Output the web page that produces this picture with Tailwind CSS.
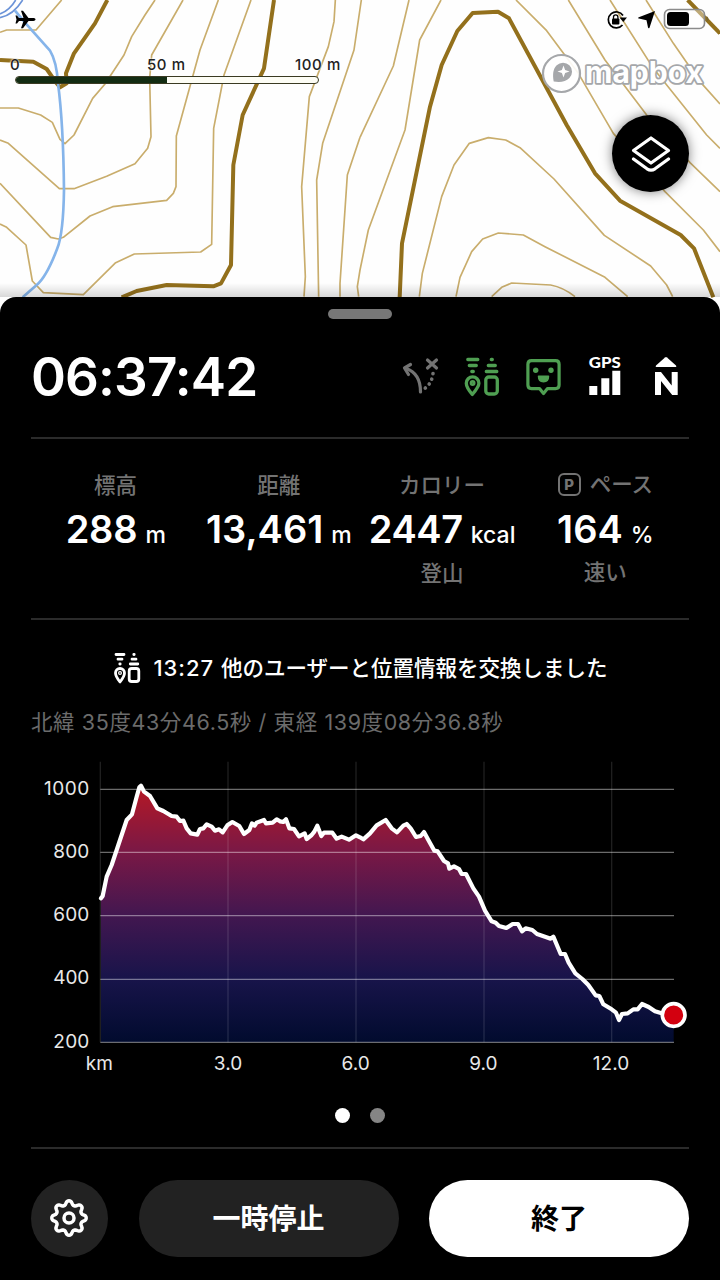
<!DOCTYPE html>
<html lang="ja">
<head>
  <meta charset="UTF-8">
  <meta name="viewport" content="width=device-width, initial-scale=1.0">
  <title>活動記録</title>
  <script src="https://cdn.jsdelivr.net/npm/@tailwindcss/browser@4"></script>
</head>
<body class="bg-black font-['Inter','Noto_Sans_CJK_JP',sans-serif] text-white">
  <div class="w-[720px] h-[1280px] flex flex-col overflow-hidden">

    <!-- map -->
    <div class="relative h-[297px] shrink-0 text-black">
      <svg class="absolute inset-0 bg-[#fefefe]" width="720" height="320" viewBox="0 0 2160 960" fill="none" stroke-linejoin="round">
        <g stroke="#c9ad6c" stroke-width="5">
          <path d="M185 0L108 90H20L0 97"/>
          <path d="M465 0L435 45L395 110L372 165L315 252L278 295L222 405L195 431L180 418L157 367L122 345L55 324H0"/>
          <path d="M549 0L455 165L449 235L453 410L443 445L405 491L320 529L222 566H178L25 430L0 420"/>
          <path d="M655 0L600 150L529 408L528 560L520 580L500 601L338 620L270 648L190 712L175 717L152 712L0 550"/>
          <path d="M753 0L672 225L641 385L635 733L602 756L403 762L347 788L250 884L130 878L97 843L78 735L20 682L0 672"/>
          <path d="M1006 0L1002 65L985 140L928 290L905 560L916 830L912 890"/>
          <path d="M1084 0L1062 150L968 430L950 540L956 890"/>
          <path d="M1080 412L1042 525L1020 850V890"/>
        </g>
        <!-- ridge side -->
        <g transform="translate(1080 0)" stroke="#c9ad6c" stroke-width="5">
          <path d="M147 0L100 198L0 412"/>
          <path d="M243 0L179 120L135 390L25 690L0 810L-8 860L-4 890"/>
          <path d="M178 890L187 820L245 590L282 495L328 430L385 413L437 420L480 443L582 537L733 706L872 798L920 855L938 890"/>
          <path d="M288 890L300 832L335 755L368 717L415 699L490 705L555 740L735 832L803 890"/>
          <path d="M395 890L425 862L455 849L572 855Q610 862 645 890"/>
          <path d="M468 0L560 92L655 220L760 400L915 575L1030 690L1080 755"/>
          <path d="M625 0L735 180L860 345L990 488L1080 575"/>
          <path d="M750 0L880 205L1040 405L1080 445"/>
          <path d="M858 0L940 130L1020 245L1080 312"/>
        </g>
        <g stroke="#93701c" stroke-width="12">
          <path d="M0 180L100 185L140 207L170 250L180 262L200 250L198 220L222 160L285 70L322 0"/>
          <path d="M822 0L792 205L728 345L700 495L693 795L663 850L640 859L500 855L410 873L365 892"/>
          <path d="M1199 892L1206 730L1290 320L1325 195L1372 93L1418 39L1494 35L1527 55L1700 375L1785 520L1860 602L2042 705L2082 745L2140 892"/>
          <path d="M2063 0L2160 100"/>
        </g>
        <g stroke="#85b4ea" stroke-width="8">
          <path d="M45 32L75 68L150 152Q170 185 174 250Q190 370 192 570Q190 700 172 745Q140 830 110 855L68 892"/>
          <path d="M0 53Q40 45 68 0M0 42Q30 30 47 0" stroke="#6b93d8" stroke-width="5"/>
        </g>
      </svg>

      <!-- scale bar -->
      <div class="absolute left-[15px] top-[56px] w-[304px] text-[15px] leading-[18px] font-medium text-[#222]">
        <div class="relative h-[20px] [text-shadow:0_0_2px_white,0_0_2px_white]">
          <span class="absolute -left-[5px]">0</span>
          <span class="absolute left-[132px] tracking-[0.6px]">50 m</span>
          <span class="absolute left-[280px] tracking-[0.6px] whitespace-nowrap">100 m</span>
        </div>
        <div class="h-[8px] rounded-full border border-[#3a3a22] bg-[#fdfdf5] overflow-hidden">
          <div class="h-full w-1/2 bg-[#132c12]"></div>
        </div>
      </div>

      <!-- status bar -->
      <svg class="absolute left-[15px] top-[10px]" width="21" height="19" viewBox="0 0 21 19"><path d="M20.5 9.6c0-1-1-1.5-2.200-1.500h-4.800L8 .8H6l2.500 7.300H4L2 5.500H.5L1.500 9.600.5 13.500H2L4 11h4.500L6 18.300h2L13.500 11h4.800c1.200 0 2.200-.5 2.200-1.400z"/></svg>
      <svg class="absolute left-[605px] top-[8px]" width="104" height="24" viewBox="0 0 104 24">
        <path d="M18 7.500A8 8 0 1 0 17.500 17" fill="none" stroke="black" stroke-width="1.700"/>
        <path d="M14.500 9.500h7.500L18.300 14z"/>
        <rect x="7" y="10.500" width="7.400" height="6" rx="1"/>
        <path d="M8.500 11V9a2.200 2.200 0 0 1 4.400 0v2" fill="none" stroke="black" stroke-width="1.300"/>
        <path d="M50 3L33.800 9.200c-.8.400-.8 1.200.1 1.400l7.600 1.700 1.500 7.300c.2 1 1.100 1 1.500.1z"/>
        <rect x="59.500" y="1.500" width="40" height="19" rx="5" fill="#fff" fill-opacity=".4" stroke="#8b8b8b" stroke-width="1.600"/>
        <rect x="62" y="4" width="22" height="14" rx="3.500"/>
        <path d="M101.500 8v6q2-1 2-3t-2-3z" fill="#776633"/>
      </svg>

      <!-- mapbox logo -->
      <svg class="absolute left-[538px] top-[50px]" width="172" height="48" viewBox="0 0 172 48">
        <circle cx="23.500" cy="23.500" r="18.500" fill="white" fill-opacity=".9" stroke="#a5a7aa" stroke-width="2.200"/>
        <path d="M15.700 31.500c-1.200-7-.7-12.500 3-16.200a8.800 8.800 0 0 1 12.700 12.700c-3.700 3.700-9 4.700-15.700 3.500z" fill="#a5a7aa"/>
        <path d="M25.500 15.500l1.600 4.400 4.400 1.600-4.400 1.600-1.600 4.400-1.600-4.400-4.400-1.600 4.400-1.600z" fill="white"/>
        <text x="47" y="32.500" textLength="118" lengthAdjust="spacingAndGlyphs" class="font-['Inter'] font-bold text-[30px]" fill="white" stroke="#a5a7aa" stroke-width="3.600" stroke-linejoin="round" paint-order="stroke">mapbox</text>
      </svg>

      <button class="absolute left-[612px] top-[115px] size-[77px] rounded-full bg-black flex items-center justify-center shadow-[0_0_12px_rgba(0,0,0,0.5)]">
        <svg width="42" height="38" viewBox="0 0 42 38" fill="none" stroke="white" stroke-width="3.200" stroke-linejoin="round" stroke-linecap="round"><path d="M21 3L38.500 15.500 21 28 3.500 15.500z"/><path d="M3.500 24L17 33.800q4 2.500 8 0L38.500 24"/></svg>
      </button>
      <div class="absolute bottom-0 inset-x-0 h-[14px] bg-linear-to-t from-black/15 to-transparent"></div>
    </div>

    <!-- sheet -->
    <div class="relative flex-1 bg-black rounded-t-[16px] px-[31px] pt-[12px] flex flex-col">
      <div class="w-[64px] h-[10px] rounded-full bg-[#777] mx-auto shrink-0"></div>

      <div class="h-[118px] flex items-center justify-between">
        <div class="text-[53px] font-semibold leading-none whitespace-nowrap tracking-[-0.9px] pb-[2px]">06:37:42</div>
        <svg width="290" height="50" viewBox="0 0 290 50" fill="none" stroke-linecap="round" stroke-linejoin="round">
          <!-- turn arrow with dotted route -->
          <g stroke="#737373" stroke-width="3.200">
            <path d="M21.500 39C21.500 27 17.500 19 7 15.500"/>
            <path d="M11.500 11.500L5.500 15l4 6.500"/>
            <path d="M28.500 7l9 8M37.500 7l-9 8"/>
            <path d="M34 20.500q-1 10-9 15.500" stroke-width="3.600" stroke-dasharray="0.100 5.500"/>
          </g>
          <!-- location exchange -->
          <g transform="translate(1.300 0)" stroke="#4f9f52" stroke-width="3.300">
            <path d="M67.500 6.500h10M69 12.500h7M71.500 18.500h1.500"/>
            <path d="M91 6.500h1M88 12.500h7M86 18.500h10.500"/>
            <path d="M72 41.500C67 35.500 66 33 66 30.200a6.300 6.300 0 0 1 12.600 0C78.600 33 77 35.500 72 41.500z"/>
            <circle cx="72.300" cy="30" r="1.300"/>
            <rect x="85.500" y="24" width="11.500" height="17" rx="3"/>
          </g>
          <!-- smile bubble -->
          <path d="M132.500 7.600h24q3.600 0 3.600 3.600v20.800q0 3.600-3.600 3.600h-8L144.500 40.500 140.500 35.600h-8q-3.600 0-3.600-3.600V11.200q0-3.600 3.600-3.600z" stroke="#4f9f52" stroke-width="3.200"/>
          <circle cx="136.700" cy="17.300" r="2.700" fill="#4f9f52"/>
          <circle cx="152" cy="17.300" r="2.700" fill="#4f9f52"/>
          <path d="M139.500 23.300h10q0 5.500-5 5.500t-5-5.500z" fill="#4f9f52" stroke="#4f9f52" stroke-width="1.500"/>
          <!-- gps -->
          <g fill="white">
            <text x="189.800" y="14.700" textLength="32" lengthAdjust="spacingAndGlyphs" class="font-['Lato'] font-black text-[15px]">GPS</text>
            <path d="M190.300 33h8v9h-8zM202.300 25.300h8v16.700h-8zM213.300 17.700h8v24.300h-8z"/>
            <path d="M266 4.500q1-.8 2 0l9 8q1 1.500-1 1.500h-18q-2 0-1-1.500z"/>
            <path d="M256 42V19h6L272.700 32.500V19h6v23h-5.500L262 28v14z"/>
          </g>
        </svg>
      </div>

      <div class="border-t-2 border-[#2b2b2b]"></div>

      <div class="h-[179px] grid grid-cols-4 pt-[30px] pl-[3px] pr-[2px] text-center whitespace-nowrap text-[21.5px] font-medium text-[#737373]">
        <div class="flex flex-col items-center">
          <div class="h-[32px] leading-[32px]">標高</div>
          <div class="h-[56px] flex items-baseline gap-[8px] text-white text-[38px] leading-[56px] font-semibold tracking-[-0.2px]">288<span class="text-[23px] font-medium">m</span></div>
        </div>
        <div class="flex flex-col items-center">
          <div class="h-[32px] leading-[32px]">距離</div>
          <div class="h-[56px] flex items-baseline gap-[8px] text-white text-[38px] leading-[56px] font-semibold">13,461<span class="text-[23px] font-medium">m</span></div>
        </div>
        <div class="flex flex-col items-center">
          <div class="h-[32px] leading-[32px]">カロリー</div>
          <div class="h-[56px] flex items-baseline gap-[8px] text-white text-[38px] leading-[56px] font-semibold tracking-[-0.4px]">2447<span class="text-[23px] font-medium tracking-normal">kcal</span></div>
          <div class="leading-[32px]">登山</div>
        </div>
        <div class="flex flex-col items-center">
          <div class="h-[32px] leading-[32px] flex items-center gap-[9px] pb-[2px]">
            <span class="size-[23px] border-2 border-[#737373] rounded-[6px] text-[15px] font-extrabold leading-none flex items-center justify-center">P</span>ペース
          </div>
          <div class="h-[56px] flex items-baseline gap-[8px] text-white text-[38px] leading-[56px] font-semibold">164<span class="text-[23px] font-medium">%</span></div>
          <div class="leading-[31px]">速い</div>
        </div>
      </div>

      <div class="border-t-2 border-[#2b2b2b]"></div>

      <div class="h-[88px] pt-[8px] pl-[2px] flex items-center justify-center gap-[12px] text-[21.5px] font-medium whitespace-nowrap">
        <svg width="27" height="32" viewBox="0 0 27 32" fill="none" stroke="white" stroke-width="2.800" stroke-linecap="round" stroke-linejoin="round">
          <path d="M2 2.500h8M4 7.200h4M5.800 12h.4"/>
          <path d="M19.800 2.500h.4M18 7.200h4M16.300 12h7.500"/>
          <path d="M6 30C2.500 25.500 1.500 23.500 1.500 21a4.500 4.500 0 0 1 9 0C10.500 23.500 9.500 25.500 6 30z"/>
          <circle cx="6" cy="21" r=".6"/>
          <rect x="15.200" y="16.500" width="9.600" height="13" rx="2.500"/>
        </svg>
        <span><span class="text-[22px] tracking-[1px]">13:27 </span>他のユーザーと位置情報を交換しました</span>
      </div>

      <div class="text-[21.5px] leading-[28px] h-[30px] tracking-[0.6px] font-normal text-[#6b6b6b] whitespace-nowrap">北緯 35度43分46.5秒 / 東経 139度08分36.8秒</div>

      <!-- elevation chart -->
      <svg class="-ml-px mt-[22px] mb-[12px] shrink-0 overflow-visible" width="660" height="330" viewBox="0 0 1980 990">
        <defs>
          <linearGradient id="elev" gradientUnits="userSpaceOnUse" x1="0" y1="80" x2="0" y2="847">
            <stop offset="0" stop-color="#b51825"/>
            <stop offset=".25" stop-color="#7b1845"/>
            <stop offset=".5" stop-color="#431750"/>
            <stop offset=".75" stop-color="#18144a"/>
            <stop offset="1" stop-color="#010b2e"/>
          </linearGradient>
        </defs>
        <path id="area" fill="url(#elev)"/>
        <path d="M211 5V847M594 5V847M978 5V847M1362 5V847M1745 5V847" stroke="white" stroke-opacity=".12" stroke-width="4"/>
        <path d="M211 88H1932M211 277H1932M211 467H1932M211 658H1932M211 847H1932" stroke="white" stroke-opacity=".42" stroke-width="4"/>
        <path id="line" fill="none" stroke="white" stroke-width="12.500" stroke-linejoin="round" stroke-linecap="round"/>
        <circle cx="1931" cy="765" r="34" fill="#d3000f" stroke="white" stroke-width="11"/>
        <g fill="#e8e8e8" class="text-[57px]" text-anchor="end">
          <text x="178" y="104" textLength="136">1000</text>
          <text x="178" y="293" textLength="108">800</text>
          <text x="178" y="484" textLength="108">600</text>
          <text x="178" y="673" textLength="108">400</text>
          <text x="178" y="864" textLength="108">200</text>
        </g>
        <g fill="#e8e8e8" class="text-[57px]" text-anchor="middle">
          <text x="208" y="930">km</text>
          <text x="594" y="930">3.0</text>
          <text x="977" y="930">6.0</text>
          <text x="1360" y="930">9.0</text>
          <text x="1743" y="930">12.0</text>
        </g>
      </svg>

      <div class="flex justify-center gap-[20px] h-[15px] shrink-0 mt-[6px]">
        <span class="size-[15px] rounded-full bg-white"></span>
        <span class="size-[15px] rounded-full bg-[#858585]"></span>
      </div>

      <div class="border-t-2 border-[#2b2b2b] mt-[24px] pt-[31px] flex justify-between text-[28px] font-bold">
        <button class="size-[77px] shrink-0 rounded-full bg-[#222] flex items-center justify-center">
          <svg class="-ml-px -mt-px" width="42" height="42" viewBox="0 0 42 42" fill="none" stroke="white" stroke-width="3.500" stroke-linejoin="round">
            <path id="gear"/>
            <circle cx="21" cy="21" r="5"/>
          </svg>
        </button>
        <button class="h-[77px] w-[260px] rounded-full bg-[#222]">一時停止</button>
        <button class="h-[77px] w-[260px] rounded-full bg-white text-black">終了</button>
      </div>
    </div>
  </div>

  <script>
    // elevation track, in chart units
    const points = [
      [213,415],[218,408],[230,350],[245,315],[265,255],[290,180],[306,163],[320,110],[328,82],[333,77],[342,95],[360,108],[382,145],[400,153],[425,168],[440,170],[450,183],[460,182],[470,205],[482,220],[502,224],[510,207],[520,205],[530,193],[545,200],[555,212],[567,208],[578,217],[592,196],[607,186],[628,198],[642,222],[658,210],[666,190],[674,197],[680,188],[702,180],[708,190],[728,188],[740,178],[750,184],[760,186],[768,178],[778,205],[792,207],[807,229],[824,220],[830,237],[845,225],[853,215],[862,197],[874,228],[882,218],[907,218],[920,236],[935,230],[957,239],[978,226],[990,232],
      [1000,238],[1020,220],[1040,196],[1067,180],[1085,205],[1101,217],[1120,197],[1130,192],[1142,205],[1158,231],[1172,228],[1182,216],[1195,240],[1213,272],[1223,274],[1242,303],[1254,310],[1258,326],[1272,319],[1287,327],[1295,342],[1308,342],[1330,385],[1347,410],[1365,452],[1385,484],[1397,488],[1407,498],[1429,504],[1448,492],[1464,492],[1476,514],[1487,505],[1507,510],[1521,522],[1545,530],[1562,536],[1570,530],[1592,582],[1605,582],[1616,608],[1636,640],[1657,657],[1675,675],[1697,706],[1708,708],[1720,733],[1745,748],[1758,758],[1767,780],[1776,762],[1793,760],[1810,748],[1823,748],[1836,732],[1856,741],[1875,754],[1895,760],[1931,765]
    ];
    const d = "M" + points.map(p => p.join(" ")).join("L");
    document.getElementById("line").setAttribute("d", d);
    document.getElementById("area").setAttribute("d", d + "V847H213Z");

    // eight rounded teeth
    let gear = "";
    for (let i = 0; i <= 96; i++) {
      const a = i / 96 * Math.PI * 2;
      const r = 15.2 + 2.3 * Math.tanh(1.3 * Math.cos(8 * a));
      gear += (i ? "L" : "M") + (21 + r * Math.sin(a)).toFixed(2) + " " + (21 - r * Math.cos(a)).toFixed(2);
    }
    document.getElementById("gear").setAttribute("d", gear + "Z");
  </script>
</body>
</html>
